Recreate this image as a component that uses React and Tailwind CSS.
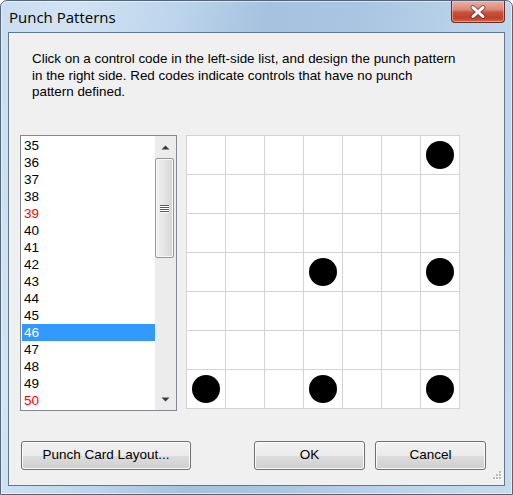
import React from "react";

const items = [35, 36, 37, 38, 39, 40, 41, 42, 43, 44, 45, 46, 47, 48, 49, 50];
const red = [39, 50];
const dots = ["0-6", "3-3", "3-6", "6-0", "6-3", "6-6"];

function Button({ children, className }) {
  return (
    <div
      className={
        "h-[29px] rounded-[3px] border border-[#707070] flex items-center justify-center text-[13.5px] text-black shadow-[inset_0_0_0_1px_#fbfbfb] bg-[linear-gradient(to_bottom,#f2f2f2_0%,#ebebeb_50%,#dddddd_50%,#cfcfcf_100%)] " +
        className
      }
      style={{ fontFamily: '"Liberation Sans", Arial, sans-serif' }}
    >
      {children}
    </div>
  );
}

export default function App() {
  return (
    <div className="w-[513px] h-[495px] bg-white overflow-hidden">
      <div className="relative w-[513px] h-[495px] rounded-t-[7px] border border-[#52657a] flex flex-col shadow-[inset_0_0_0_1px_rgba(255,255,255,0.55)] bg-[linear-gradient(100deg,#c9ddf1_0%,#d2e3f4_12%,#bcd4ec_30%,#a6c2de_45%,#a9c5e1_60%,#bad2ea_78%,#c7dbef_100%)]">
        {/* title bar */}
        <div className="relative h-[31px] shrink-0">
          <div
            className="absolute left-[8px] top-[9px] text-[15px] leading-[15px] text-black"
            style={{ fontFamily: '"Open Sans", "Noto Sans", sans-serif' }}
          >
            Punch Patterns
          </div>
          <div className="absolute right-[7px] top-0 w-[54px] h-[22px] rounded-b-[4px] border border-t-0 border-[#6a2d22] shadow-[inset_0_0_0_1px_rgba(255,210,200,0.5)] bg-[linear-gradient(to_bottom,#eab0a3_0%,#db8a79_40%,#c9503a_55%,#c2412a_80%,#d2674c_100%)] flex items-center justify-center">
            <svg width="18" height="14" viewBox="0 0 18 14">
              <path d="M4 2.5 L14 11.5 M14 2.5 L4 11.5" stroke="#5a2a22" strokeWidth="5" strokeLinecap="round" opacity="0.55" />
              <path d="M4 2.5 L14 11.5 M14 2.5 L4 11.5" stroke="#ffffff" strokeWidth="3" strokeLinecap="round" />
            </svg>
          </div>
        </div>

        {/* client area */}
        <div className="relative mx-[7px] mb-[8px] flex-1 border border-[#64788c] bg-[#f0f0f0] flex flex-col">
          <div
            className="ml-[23px] mt-[18px] text-[13.4px] leading-[16.67px] text-black whitespace-nowrap"
            style={{ fontFamily: '"Liberation Sans", Arial, sans-serif' }}
          >
            Click on a control code in the left-side list, and design the punch pattern
            <br />
            in the right side. Red codes indicate controls that have no punch
            <br />
            pattern defined.
          </div>

          <div className="ml-[11px] mt-[34px] flex items-start gap-[9px]">
            {/* listbox */}
            <div className="w-[157px] h-[276px] border border-[#828790] bg-white flex">
              <div className="w-[134px] pt-px pl-px">
                {items.map((n) => (
                  <div
                    key={n}
                    className={
                      "h-[17px] pl-[2px] text-[13.5px] leading-[17px] " +
                      (n === 46
                        ? "bg-[#3399ff] text-white"
                        : red.includes(n)
                        ? "text-[#ff0000]"
                        : "text-black")
                    }
                    style={{ fontFamily: '"Liberation Sans", Arial, sans-serif' }}
                  >
                    {n}
                  </div>
                ))}
              </div>
              {/* scrollbar */}
              <div className="w-[21px] h-[274px] bg-[#ececec] flex flex-col items-center">
                <div className="h-[22px] w-full flex items-center justify-center">
                  <svg width="9" height="5" viewBox="0 0 9 5">
                    <path d="M0.5 4.5 L4.5 0.5 L8.5 4.5 Z" fill="#3a3a3a" />
                  </svg>
                </div>
                <div className="w-[19px] h-[100px] self-start rounded-[2px] border border-[#979797] shadow-[inset_0_0_0_1px_#f8f8f8] bg-[linear-gradient(to_right,#f1f1f1_0%,#e6e6e6_45%,#d4d4d4_100%)] flex items-center justify-center">
                  <svg width="9" height="9" viewBox="0 0 9 9">
                    <path d="M0 1.5 H9 M0 3.5 H9 M0 5.5 H9 M0 7.5 H9" stroke="#5a5a5a" strokeWidth="1" />
                    <path d="M0 2.5 H9 M0 4.5 H9 M0 6.5 H9 M0 8.5 H9" stroke="#ffffff" strokeWidth="1" />
                  </svg>
                </div>
                <div className="flex-1" />
                <div className="h-[22px] w-full flex items-center justify-center">
                  <svg width="9" height="5" viewBox="0 0 9 5">
                    <path d="M0.5 0.5 L4.5 4.5 L8.5 0.5 Z" fill="#3a3a3a" />
                  </svg>
                </div>
              </div>
            </div>

            {/* punch grid */}
            <div className="grid grid-cols-[repeat(7,38px)] grid-rows-[repeat(7,38px)] gap-px p-px bg-[#d3d3d3]">
              {Array.from({ length: 49 }).map((_, i) => {
                const r = Math.floor(i / 7);
                const c = i % 7;
                const on = dots.includes(r + "-" + c);
                return (
                  <div key={i} className="bg-white flex items-center justify-center">
                    {on && <div className="w-[28px] h-[28px] rounded-full bg-black" />}
                  </div>
                );
              })}
            </div>
          </div>

          <div className="mt-[30px] flex">
            <Button className="ml-[12px] w-[170px]">Punch Card Layout...</Button>
            <Button className="ml-[63px] w-[111px]">OK</Button>
            <Button className="ml-[10px] w-[111px]">Cancel</Button>
          </div>

          {/* resize grip */}
          <svg className="absolute right-[2px] bottom-[3px]" width="12" height="12" viewBox="0 0 12 12">
            {[
              [9, 1],
              [6, 4],
              [9, 4],
              [3, 7],
              [6, 7],
              [9, 7],
            ].map(([x, y], k) => (
              <g key={k}>
                <rect x={x + 1} y={y + 1} width="2" height="2" fill="#ffffff" />
                <rect x={x} y={y} width="2" height="2" fill="#b9b9b9" />
              </g>
            ))}
          </svg>
        </div>
      </div>
    </div>
  );
}
